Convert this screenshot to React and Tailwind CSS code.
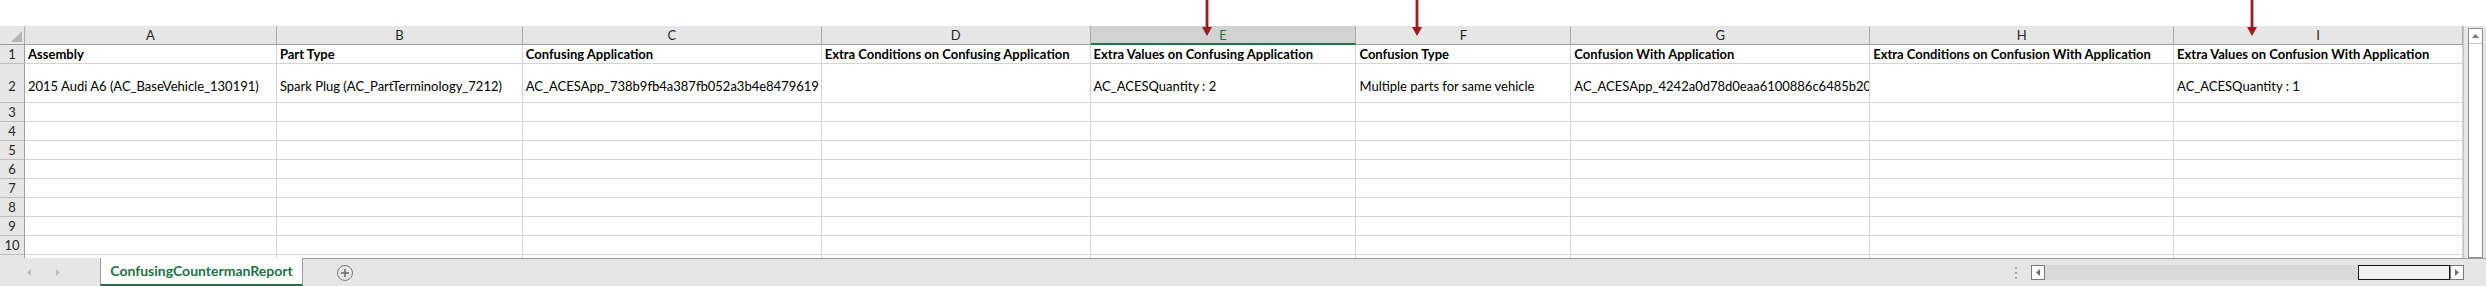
import React from "react";

const cols = [
  { key: "A", w: "w-[252px]", head: "Assembly", val: "2015 Audi A6 (AC_BaseVehicle_130191)" },
  { key: "B", w: "w-[246px]", head: "Part Type", val: "Spark Plug (AC_PartTerminology_7212)" },
  { key: "C", w: "w-[299px]", head: "Confusing Application", val: "AC_ACESApp_738b9fb4a387fb052a3b4e8479619" },
  { key: "D", w: "w-[269px]", head: "Extra Conditions on Confusing Application", val: "" },
  { key: "E", w: "w-[266px]", head: "Extra Values on Confusing Application", val: "AC_ACESQuantity : 2" },
  { key: "F", w: "w-[215px]", head: "Confusion Type", val: "Multiple parts for same vehicle" },
  { key: "G", w: "w-[299px]", head: "Confusion With Application", val: "AC_ACESApp_4242a0d78d0eaa6100886c6485b20" },
  { key: "H", w: "w-[304px]", head: "Extra Conditions on Confusion With Application", val: "" },
  { key: "I", w: "w-[289px]", head: "Extra Values on Confusion With Application", val: "AC_ACESQuantity : 1" },
];

const emptyRows = [3, 4, 5, 6, 7, 8, 9, 10];

function Arrow({ className }) {
  return (
    <svg className={`absolute top-0 ${className}`} width="10" height="36" viewBox="0 0 10 36">
      <rect x="3.6" y="0" width="2.8" height="29" fill="#9e1b20" />
      <polygon points="0,27 10,27 5,36" fill="#9e1b20" />
    </svg>
  );
}

function ColumnHeaders() {
  return (
    <div className="flex h-[19px]">
      <div className="w-[25px] bg-[#e6e6e6] border-r border-b border-r-[#ababab] border-b-[#9e9e9e] flex items-end justify-end">
        <svg width="11" height="11" viewBox="0 0 11 11" className="mr-[2px] mb-[2px]">
          <polygon points="11,0 11,11 0,11" fill="#b5b5b5" />
        </svg>
      </div>
      {cols.map((c) =>
        c.key === "E" ? (
          <div
            key={c.key}
            className={`${c.w} bg-[#d2d2d2] border-r border-r-[#ababab] border-b-2 border-b-[#217346] flex items-center justify-center pt-[1px] text-[#217346]`}
          >
            {c.key}
          </div>
        ) : (
          <div
            key={c.key}
            className={`${c.w} bg-[#e6e6e6] border-r border-b border-r-[#ababab] border-b-[#9e9e9e] flex items-center justify-center pt-[1px] text-[#262626]`}
          >
            {c.key}
          </div>
        )
      )}
    </div>
  );
}

function RowNum({ n, h, pb = "pb-[2px]" }) {
  return (
    <div className={`w-[25px] ${h} bg-[#e6e6e6] border-r border-b border-r-[#9e9e9e] border-b-[#bdbdbd] flex items-end justify-center ${pb} text-[#262626]`}>
      {n}
    </div>
  );
}

function Grid() {
  return (
    <div className="w-[2464px] border-r border-r-[#c6c6c6]">
      <ColumnHeaders />
      <div className="flex h-[19px]">
        <RowNum n={1} h="h-[19px]" />
        {cols.map((c) => (
          <div key={c.key} className={`${c.w} border-r border-b border-[#d4d4d4] flex items-end pl-[3px] pb-[2px] font-bold whitespace-nowrap overflow-hidden`}>
            {c.head}
          </div>
        ))}
      </div>
      <div className="flex h-[39px]">
        <RowNum n={2} h="h-[39px]" pb="pb-[9px]" />
        {cols.map((c) => (
          <div key={c.key} className={`${c.w} border-r border-b border-[#d4d4d4] flex items-end pl-[3px] pb-[9px] whitespace-nowrap overflow-hidden`}>
            {c.val}
          </div>
        ))}
      </div>
      {emptyRows.map((r) => (
        <div key={r} className="flex h-[19px]">
          <RowNum n={r} h="h-[19px]" />
          {cols.map((c) => (
            <div key={c.key} className={`${c.w} border-r border-b border-[#d4d4d4]`} />
          ))}
        </div>
      ))}
      <div className="flex h-[3px]">
        <div className="w-[25px] bg-[#e6e6e6] border-r border-r-[#9e9e9e]" />
        {cols.map((c) => (
          <div key={c.key} className={`${c.w} border-r border-[#d4d4d4]`} />
        ))}
      </div>
    </div>
  );
}

function VerticalScroll() {
  return (
    <div className="w-[22px] bg-[#e6e6e6] pl-[4px] pt-[2px]">
      <div className="w-[15px] h-[230px] bg-white border border-[#8c8c8c] flex flex-col">
        <div className="h-[15px] border-b border-[#c6c6c6] flex items-center justify-center">
          <svg width="7" height="4" viewBox="0 0 7 4">
            <polygon points="0,4 7,4 3.5,0" fill="#7a7a7a" />
          </svg>
        </div>
      </div>
    </div>
  );
}

function SheetBar() {
  return (
    <div className="flex h-[28px] bg-[#e6e6e6]">
      <div className="w-[100px] flex items-center pl-[27px] gap-[25px]">
        <svg width="4" height="7" viewBox="0 0 4 7">
          <polygon points="4,0 4,7 0,3.5" fill="#c0c0c0" />
        </svg>
        <svg width="4" height="7" viewBox="0 0 4 7">
          <polygon points="0,0 0,7 4,3.5" fill="#c0c0c0" />
        </svg>
      </div>
      <div className="w-[203px] bg-white border-l border-r border-[#9e9e9e] border-b-2 border-b-[#217346] flex items-center justify-center font-bold text-[14px] text-[#217346]">
        ConfusingCountermanReport
      </div>
      <div className="flex-1 flex items-center border-t border-[#9e9e9e]">
        <div className="ml-[34px] w-[16px] h-[16px] rounded-full border border-[#7a7a7a] flex items-center justify-center">
          <svg width="8" height="8" viewBox="0 0 8 8">
            <rect x="3.2" y="0" width="1.6" height="8" fill="#6e6e6e" />
            <rect x="0" y="3.2" width="8" height="1.6" fill="#6e6e6e" />
          </svg>
        </div>
        <div className="ml-auto flex items-center h-full">
          <div className="flex flex-col gap-[3px] mr-[14px]">
            <div className="w-[2px] h-[2px] bg-[#a6a6a6]" />
            <div className="w-[2px] h-[2px] bg-[#a6a6a6]" />
            <div className="w-[2px] h-[2px] bg-[#a6a6a6]" />
          </div>
          <div className="w-[14px] h-[15px] bg-white border border-[#7a7a7a] flex items-center justify-center">
            <svg width="4" height="7" viewBox="0 0 4 7">
              <polygon points="4,0 4,7 0,3.5" fill="#6e6e6e" />
            </svg>
          </div>
          <div className="w-[313px] h-[15px] bg-[#d9d9d9]" />
          <div className="w-[92px] h-[15px] bg-[#f1f1f1] border border-[#1a1a1a]" />
          <div className="w-[14px] h-[15px] bg-white border border-[#7a7a7a] flex items-center justify-center">
            <svg width="4" height="7" viewBox="0 0 4 7">
              <polygon points="0,0 0,7 4,3.5" fill="#6e6e6e" />
            </svg>
          </div>
          <div className="w-[22px]" />
        </div>
      </div>
    </div>
  );
}

export default function App() {
  return (
    <div className="relative w-[2486px] h-[286px] overflow-hidden bg-white font-['Lato',sans-serif] text-[13px] leading-none text-black">
      <div className="h-[26px]" />
      <div className="flex">
        <Grid />
        <VerticalScroll />
      </div>
      <SheetBar />
      <Arrow className="left-[1202px]" />
      <Arrow className="left-[1412px]" />
      <Arrow className="left-[2247px]" />
    </div>
  );
}
